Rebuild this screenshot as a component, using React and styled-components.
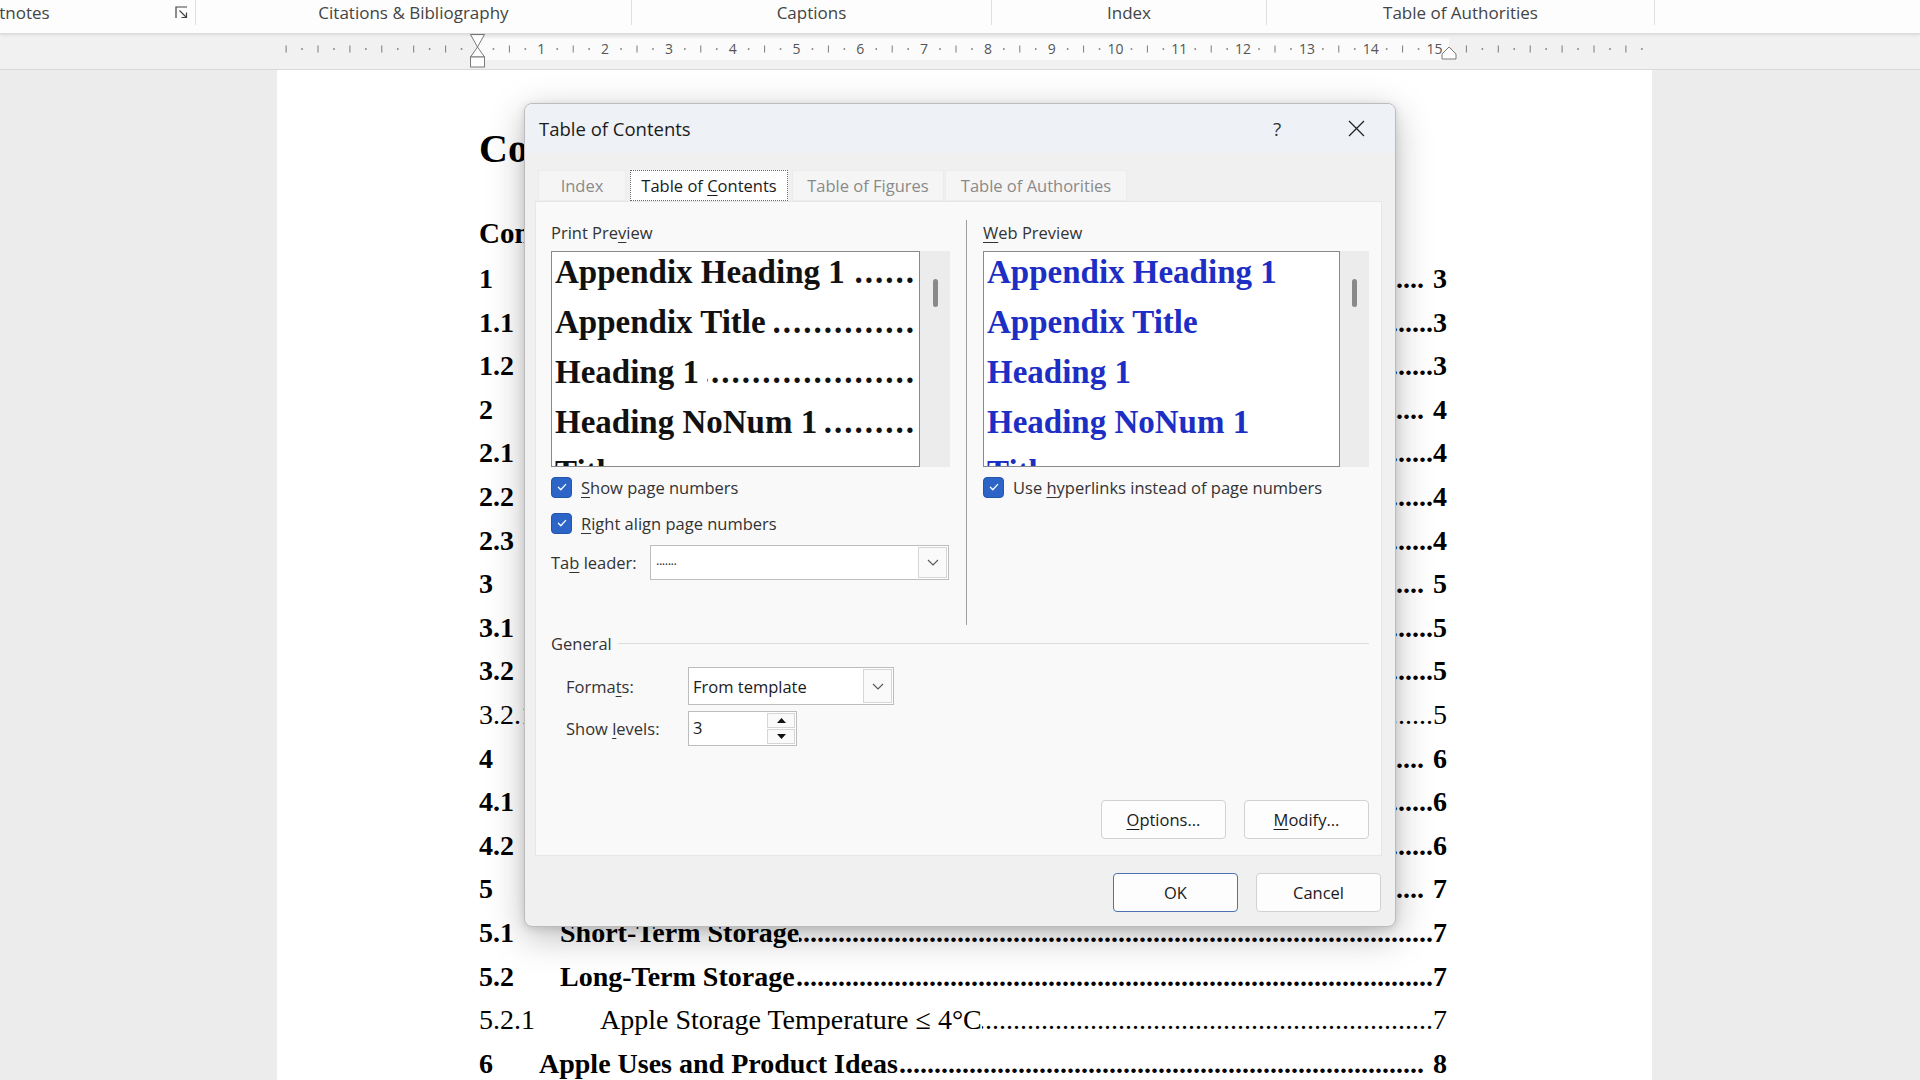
import styled, { createGlobalStyle } from "styled-components";

const UI = `"Open Sans", "Noto Sans", sans-serif`;
const SERIF = `"Liberation Serif", "Times New Roman", serif`;

const GlobalStyle = createGlobalStyle`
    * { box-sizing: border-box; }
    html, body { margin: 0; padding: 0; }
    body {
        width: 1920px;
        height: 1080px;
        overflow: hidden;
        background: #ececec;
        font-family: ${UI};
    }
`;

const tocRows = [
    [1, "1", "Introduction", "3"],
    [2, "1.1", "Background", "3"],
    [2, "1.2", "Purpose of This Guide", "3"],
    [1, "2", "Apple Varieties", "4"],
    [2, "2.1", "Sweet Apples", "4"],
    [2, "2.2", "Tart Apples", "4"],
    [2, "2.3", "Baking Apples", "4"],
    [1, "3", "Growing Apples", "5"],
    [2, "3.1", "Climate and Soil", "5"],
    [2, "3.2", "Planting and Pruning", "5"],
    [3, "3.2.1", "Pruning Schedule", "5"],
    [1, "4", "Harvesting", "6"],
    [2, "4.1", "Signs of Ripeness", "6"],
    [2, "4.2", "Picking Techniques", "6"],
    [1, "5", "Storing Apples", "7"],
    [2, "5.1", "Short-Term Storage", "7"],
    [2, "5.2", "Long-Term Storage", "7"],
    [3, "5.2.1", "Apple Storage Temperature ≤ 4°C", "7"],
    [1, "6", "Apple Uses and Product Ideas", "8"],
];

const previewItems = ["Appendix Heading 1", "Appendix Title", "Heading 1", "Heading NoNum 1", "Title"];

const DOTS = ".".repeat(200);

function Ruler() {
    const x0 = 477.5;
    const cm = 63.8;
    const cy = 15;
    const marks = [];
    for (let q = -12; q <= 73; q++) {
        if (q === 0) continue;
        const x = x0 + (q * cm) / 4;
        if (q % 4 === 0) {
            const n = q / 4;
            if (n >= 1 && n <= 15) {
                marks.push(
                    <text key={q} x={x} y={cy + 5} textAnchor="middle" fontSize="14" fill="#555" fontFamily="Open Sans, sans-serif">
                        {n}
                    </text>
                );
            } else {
                marks.push(<line key={q} x1={x} x2={x} y1={cy - 3.5} y2={cy + 3.5} stroke="#7a7a7a" strokeWidth="1" />);
            }
        } else if (q % 2 === 0) {
            marks.push(<line key={q} x1={x} x2={x} y1={cy - 3.5} y2={cy + 3.5} stroke="#7a7a7a" strokeWidth="1" />);
        } else {
            marks.push(<rect key={q} x={x - 0.8} y={cy - 0.8} width="1.6" height="1.6" fill="#7a7a7a" />);
        }
    }
    return (
        <svg width="1920" height="35" viewBox="0 0 1920 35">
            <rect x={x0} y="4" width={1449 - x0} height="22" fill="#fbfbfb" />
            {marks}
            <g fill="#fff" stroke="#7a7a7a" strokeWidth="1">
                <path d={`M${x0 - 7} 0.5 H${x0 + 7} L${x0} 13 Z`} />
                <path d={`M${x0} 13 L${x0 + 7} 23 H${x0 - 7} Z`} />
                <rect x={x0 - 7} y="23" width="14" height="10" />
                <path d="M1449 13 L1456 20 V25 H1442 V20 Z" />
            </g>
        </svg>
    );
}

function Chevron() {
    return (
        <svg width="12" height="7" viewBox="0 0 12 7">
            <path d="M1 1l5 5 5-5" fill="none" stroke="#5a5a5a" strokeWidth="1.2" />
        </svg>
    );
}

function Check() {
    return (
        <svg width="12" height="12" viewBox="0 0 12 12">
            <path d="M2.4 6.3l2.4 2.4 4.9-5.3" fill="none" stroke="#fff" strokeWidth="1.3" strokeLinecap="round" strokeLinejoin="round" />
        </svg>
    );
}

export default function App() {
    return (
        <>
            <GlobalStyle />
            <Screen>
                <Ribbon>
                    <Group $w={196} $align="space-between">
                        <GroupLabel $cut>Footnotes</GroupLabel>
                        <Launcher>
                            <svg width="13" height="13" viewBox="0 0 13 13">
                                <path d="M1 12V1h11M4.5 4.5l7 7M11.5 6.5v5h-5" fill="none" stroke="#444" strokeWidth="1.2" />
                            </svg>
                        </Launcher>
                    </Group>
                    <Group $w={436}><GroupLabel>Citations &amp; Bibliography</GroupLabel></Group>
                    <Group $w={360}><GroupLabel>Captions</GroupLabel></Group>
                    <Group $w={275}><GroupLabel>Index</GroupLabel></Group>
                    <Group $w={388}><GroupLabel>Table of Authorities</GroupLabel></Group>
                </Ribbon>

                <RulerBar>
                    <Ruler />
                </RulerBar>

                <Workspace>
                    <Page>
                        <DocTitle>Contents</DocTitle>
                        <TocHeading>Contents</TocHeading>
                        {tocRows.map(([level, num, title, page]) => (
                            <TocRow key={num} $level={level}>
                                <TocNum $level={level}>{num}</TocNum>
                                <span>{title}</span>
                                <Leader $gap={level === 1 ? 9 : 0}>{DOTS}</Leader>
                                <span>{page}</span>
                            </TocRow>
                        ))}
                    </Page>
                </Workspace>

                <Dialog>
                    <TitleBar>
                        <DialogTitle>Table of Contents</DialogTitle>
                        <TitleButton>?</TitleButton>
                        <TitleButton>
                            <svg width="17" height="17" viewBox="0 0 17 17">
                                <path d="M1 1l15 15M16 1L1 16" stroke="#222" strokeWidth="1.3" />
                            </svg>
                        </TitleButton>
                    </TitleBar>

                    <DialogBody>
                        <TabStrip>
                            <Tab $w={88}>Index</Tab>
                            <Tab $w={158} $active><span>Table of <Key>C</Key>ontents</span></Tab>
                            <Tab $w={152}>Table of Figures</Tab>
                            <Tab $w={182}>Table of Authorities</Tab>
                        </TabStrip>

                        <TabPanel>
                            <TopSection>
                                <Column>
                                    <FieldLabel>Print Pre<Key>v</Key>iew</FieldLabel>
                                    <PreviewWrap>
                                        <PreviewBox $w={369}>
                                            <PreviewList>
                                                {previewItems.map((item) => (
                                                    <PreviewLine key={item}>
                                                        <span>{item}</span>
                                                        <PreviewLeader>{DOTS}</PreviewLeader>
                                                    </PreviewLine>
                                                ))}
                                            </PreviewList>
                                        </PreviewBox>
                                        <ScrollTrack $w={30}><Thumb /></ScrollTrack>
                                    </PreviewWrap>
                                    <CheckRow $mt={5}>
                                        <CheckBox><Check /></CheckBox>
                                        <span><Key>S</Key>how page numbers</span>
                                    </CheckRow>
                                    <CheckRow $mt={6}>
                                        <CheckBox><Check /></CheckBox>
                                        <span><Key>R</Key>ight align page numbers</span>
                                    </CheckRow>
                                    <FieldRow $mt={7} $h={35}>
                                        <RowLabel $w={99}>Ta<Key>b</Key> leader:</RowLabel>
                                        <Select $w={299}>
                                            <LeaderSample>.......</LeaderSample>
                                            <DropButton><Chevron /></DropButton>
                                        </Select>
                                    </FieldRow>
                                </Column>

                                <Divider />

                                <Column>
                                    <FieldLabel><Key>W</Key>eb Preview</FieldLabel>
                                    <PreviewWrap>
                                        <PreviewBox $w={357}>
                                            <PreviewList>
                                                {previewItems.map((item) => (
                                                    <WebLine key={item}>{item}</WebLine>
                                                ))}
                                            </PreviewList>
                                        </PreviewBox>
                                        <ScrollTrack $w={29}><Thumb /></ScrollTrack>
                                    </PreviewWrap>
                                    <CheckRow $mt={5}>
                                        <CheckBox><Check /></CheckBox>
                                        <span>Use <Key>h</Key>yperlinks instead of page numbers</span>
                                    </CheckRow>
                                </Column>
                            </TopSection>

                            <GroupHeader>
                                <span>General</span>
                                <Rule />
                            </GroupHeader>

                            <FieldRow $mt={13} $h={38} $indent>
                                <RowLabel $w={122}>Forma<Key>t</Key>s:</RowLabel>
                                <Select $w={206}>
                                    <SelectText>From template</SelectText>
                                    <DropButton><Chevron /></DropButton>
                                </Select>
                            </FieldRow>
                            <FieldRow $mt={6} $h={35} $indent>
                                <RowLabel $w={122}>Show <Key>l</Key>evels:</RowLabel>
                                <Select $w={109}>
                                    <SelectText $up>3</SelectText>
                                    <Spinner>
                                        <SpinButton>
                                            <svg width="9" height="5" viewBox="0 0 9 5"><path d="M4.5 0L9 5H0Z" fill="#111" /></svg>
                                        </SpinButton>
                                        <SpinButton>
                                            <svg width="9" height="5" viewBox="0 0 9 5"><path d="M0 0H9L4.5 5Z" fill="#111" /></svg>
                                        </SpinButton>
                                    </Spinner>
                                </Select>
                            </FieldRow>

                            <PanelButtons>
                                <DialogButton><Key>O</Key>ptions...</DialogButton>
                                <DialogButton><Key>M</Key>odify...</DialogButton>
                            </PanelButtons>
                        </TabPanel>

                        <FooterButtons>
                            <DialogButton $primary>OK</DialogButton>
                            <DialogButton>Cancel</DialogButton>
                        </FooterButtons>
                    </DialogBody>
                </Dialog>
            </Screen>
        </>
    );
}

const Screen = styled.div`
    position: relative;
    width: 1920px;
    height: 1080px;
    overflow: hidden;
`;

const Ribbon = styled.div`
    position: relative;
    z-index: 2;
    height: 34px;
    display: flex;
    align-items: flex-start;
    background: #fdfdfd;
    border-bottom: 1px solid #dcdcdc;
    box-shadow: 0 1px 3px rgba(0, 0, 0, 0.1);
    overflow: hidden;
`;

const Group = styled.div`
    width: ${(p) => p.$w}px;
    flex: none;
    height: 25px;
    display: flex;
    align-items: center;
    justify-content: ${(p) => p.$align || "center"};
    border-right: 1px solid #e0e0e0;
`;

const GroupLabel = styled.span`
    font-size: 17px;
    color: #444;
    white-space: nowrap;
    margin-left: ${(p) => (p.$cut ? "-30px" : "0")};
`;

const Launcher = styled.span`
    display: flex;
    margin-right: 7px;
`;

const RulerBar = styled.div`
    height: 36px;
    background: #f1f1f1;
    border-bottom: 1px solid #d9d9d9;

    svg { display: block; }
`;

const Workspace = styled.div`
    height: 1010px;
    padding-left: 277px;
    overflow: hidden;
`;

const Page = styled.div`
    width: 1375px;
    min-height: 100%;
    background: #ffffff;
    padding: 54px 205px 0 202px;
    font-family: ${SERIF};
    color: #000;
`;

const DocTitle = styled.div`
    font-size: 40px;
    font-weight: 700;
    line-height: 50px;
`;

const TocHeading = styled.div`
    font-size: 29px;
    font-weight: 700;
    line-height: 40px;
    margin: 39px 0 4px;
`;

const TocRow = styled.div`
    display: flex;
    height: 43.6px;
    line-height: 43.6px;
    font-size: 28px;
    font-weight: ${(p) => (p.$level === 3 ? 400 : 700)};
    white-space: nowrap;
`;

const TocNum = styled.span`
    flex: none;
    width: ${(p) => [0, 60, 81, 121][p.$level]}px;
`;

const Leader = styled.span`
    flex: 1;
    min-width: 0;
    overflow: hidden;
    direction: rtl;
    margin-right: ${(p) => p.$gap}px;
`;

const Dialog = styled.div`
    position: absolute;
    left: 524px;
    top: 103px;
    width: 872px;
    height: 824px;
    display: flex;
    flex-direction: column;
    background: #f0f0f0;
    border: 1px solid #bcbcbc;
    border-radius: 8px;
    box-shadow: 0 10px 36px rgba(0, 0, 0, 0.26), 0 2px 8px rgba(0, 0, 0, 0.12);
    overflow: hidden;
    font-family: ${UI};
    font-size: 16.5px;
    color: #1b1b1b;
`;

const TitleBar = styled.div`
    height: 49px;
    flex: none;
    display: flex;
    align-items: center;
    gap: 33px;
    padding: 0 16px 0 14px;
    background: #eef2f7;
`;

const DialogTitle = styled.div`
    flex: 1;
    font-size: 18.5px;
    color: #1b1b1b;
`;

const TitleButton = styled.div`
    width: 46px;
    height: 49px;
    display: flex;
    align-items: center;
    justify-content: center;
    font-size: 19px;
    color: #333;
`;

const DialogBody = styled.div`
    flex: 1;
    display: flex;
    flex-direction: column;
    padding: 17px 14px 14px 11px;
`;

const TabStrip = styled.div`
    height: 31px;
    display: flex;
    gap: 4px;
    padding-left: 2px;

    & > :last-child { margin-left: -3px; }
`;

const Tab = styled.div`
    width: ${(p) => p.$w}px;
    height: 31px;
    display: flex;
    align-items: center;
    justify-content: center;
    background: ${(p) => (p.$active ? "#ffffff" : "#f5f5f5")};
    color: ${(p) => (p.$active ? "#1b1b1b" : "#8a8a8a")};
    border: 1px ${(p) => (p.$active ? "dotted #6b6b6b" : "solid #ececec")};
    white-space: nowrap;
`;

const Key = styled.span`
    text-decoration: underline;
    text-decoration-thickness: 1px;
    text-underline-offset: 3px;
`;

const TabPanel = styled.div`
    margin-top: 1px;
    height: 653px;
    display: flex;
    flex-direction: column;
    padding: 18px 12px 16px 15px;
    background: #f9f9f9;
    box-shadow: 0 0 0 1px #e6e6e6;
`;

const TopSection = styled.div`
    height: 405px;
    display: grid;
    grid-template-columns: 399px 1px 386px;
    column-gap: 16px;
`;

const Column = styled.div`
    display: flex;
    flex-direction: column;
`;

const Divider = styled.div`
    background: #9f9f9f;
`;

const FieldLabel = styled.div`
    margin-top: 2px;
    line-height: 22px;
    color: #333;
`;

const PreviewWrap = styled.div`
    margin-top: 7px;
    height: 216px;
    display: flex;
`;

const PreviewBox = styled.div`
    width: ${(p) => p.$w}px;
    height: 216px;
    background: #ffffff;
    border: 1px solid #8a8a8a;
    overflow: hidden;
    padding: 0 3px;
`;

const PreviewList = styled.div`
    margin-top: -5px;
`;

const PreviewLine = styled.div`
    display: flex;
    height: 50px;
    line-height: 50px;
    font-family: ${SERIF};
    font-size: 33px;
    font-weight: 700;
    color: #111;
    white-space: nowrap;
`;

const PreviewLeader = styled.span`
    flex: 1;
    min-width: 0;
    overflow: hidden;
    direction: rtl;
    letter-spacing: 2px;
    margin-left: 8px;
`;

const WebLine = styled.div`
    height: 50px;
    line-height: 50px;
    font-family: ${SERIF};
    font-size: 33px;
    font-weight: 700;
    color: #1c2ec4;
    white-space: nowrap;
`;

const ScrollTrack = styled.div`
    width: ${(p) => p.$w}px;
    background: #ececec;
    display: flex;
    justify-content: center;
    padding-top: 28px;
`;

const Thumb = styled.div`
    width: 5px;
    height: 28px;
    border-radius: 3px;
    background: #8a8a8a;
`;

const CheckRow = styled.div`
    margin-top: ${(p) => p.$mt}px;
    height: 30px;
    display: flex;
    align-items: center;
    gap: 9px;
    color: #333;
`;

const CheckBox = styled.span`
    width: 21px;
    height: 21px;
    flex: none;
    display: flex;
    align-items: center;
    justify-content: center;
    border-radius: 4px;
    background: #2c64c8;
    border: 1px solid #2456b0;
`;

const FieldRow = styled.div`
    margin-top: ${(p) => p.$mt}px;
    height: ${(p) => p.$h}px;
    display: flex;
    align-items: center;
    padding-left: ${(p) => (p.$indent ? 15 : 0)}px;
    color: #333;
`;

const RowLabel = styled.span`
    width: ${(p) => p.$w}px;
    flex: none;
`;

const Select = styled.div`
    width: ${(p) => p.$w}px;
    height: 100%;
    display: flex;
    align-items: stretch;
    background: #ffffff;
    border: 1px solid #bdbdbd;
`;

const SelectText = styled.span`
    flex: 1;
    display: flex;
    align-items: center;
    padding: 0 0 ${(p) => (p.$up ? 3 : 0)}px 4px;
    color: #1b1b1b;
`;

const LeaderSample = styled.span`
    flex: 1;
    display: flex;
    align-items: center;
    padding: 0 0 6px 5px;
    font-size: 13px;
    letter-spacing: -0.5px;
    color: #333;
`;

const DropButton = styled.span`
    width: 29px;
    margin: 1px;
    display: flex;
    align-items: center;
    justify-content: center;
    background: #fafafa;
    border: 1px solid #d6d6d6;
`;

const Spinner = styled.span`
    width: 28px;
    margin: 1px;
    display: flex;
    flex-direction: column;
    gap: 1px;
`;

const SpinButton = styled.span`
    flex: 1;
    display: flex;
    align-items: center;
    justify-content: center;
    background: #fafafa;
    border: 1px solid #d6d6d6;
`;

const GroupHeader = styled.div`
    margin-top: 7px;
    height: 22px;
    display: flex;
    align-items: center;
    gap: 6px;
    color: #333;
`;

const Rule = styled.div`
    flex: 1;
    height: 1px;
    background: #dddddd;
`;

const PanelButtons = styled.div`
    margin-top: auto;
    display: flex;
    justify-content: flex-end;
    gap: 18px;
`;

const FooterButtons = styled.div`
    margin-top: 18px;
    display: flex;
    justify-content: flex-end;
    gap: 18px;
`;

const DialogButton = styled.div`
    width: 125px;
    height: 39px;
    display: flex;
    align-items: center;
    justify-content: center;
    background: #fdfdfd;
    border: 1px solid ${(p) => (p.$primary ? "#4d72b3" : "#d1d1d1")};
    border-radius: 4px;
    color: #1b1b1b;
`;
